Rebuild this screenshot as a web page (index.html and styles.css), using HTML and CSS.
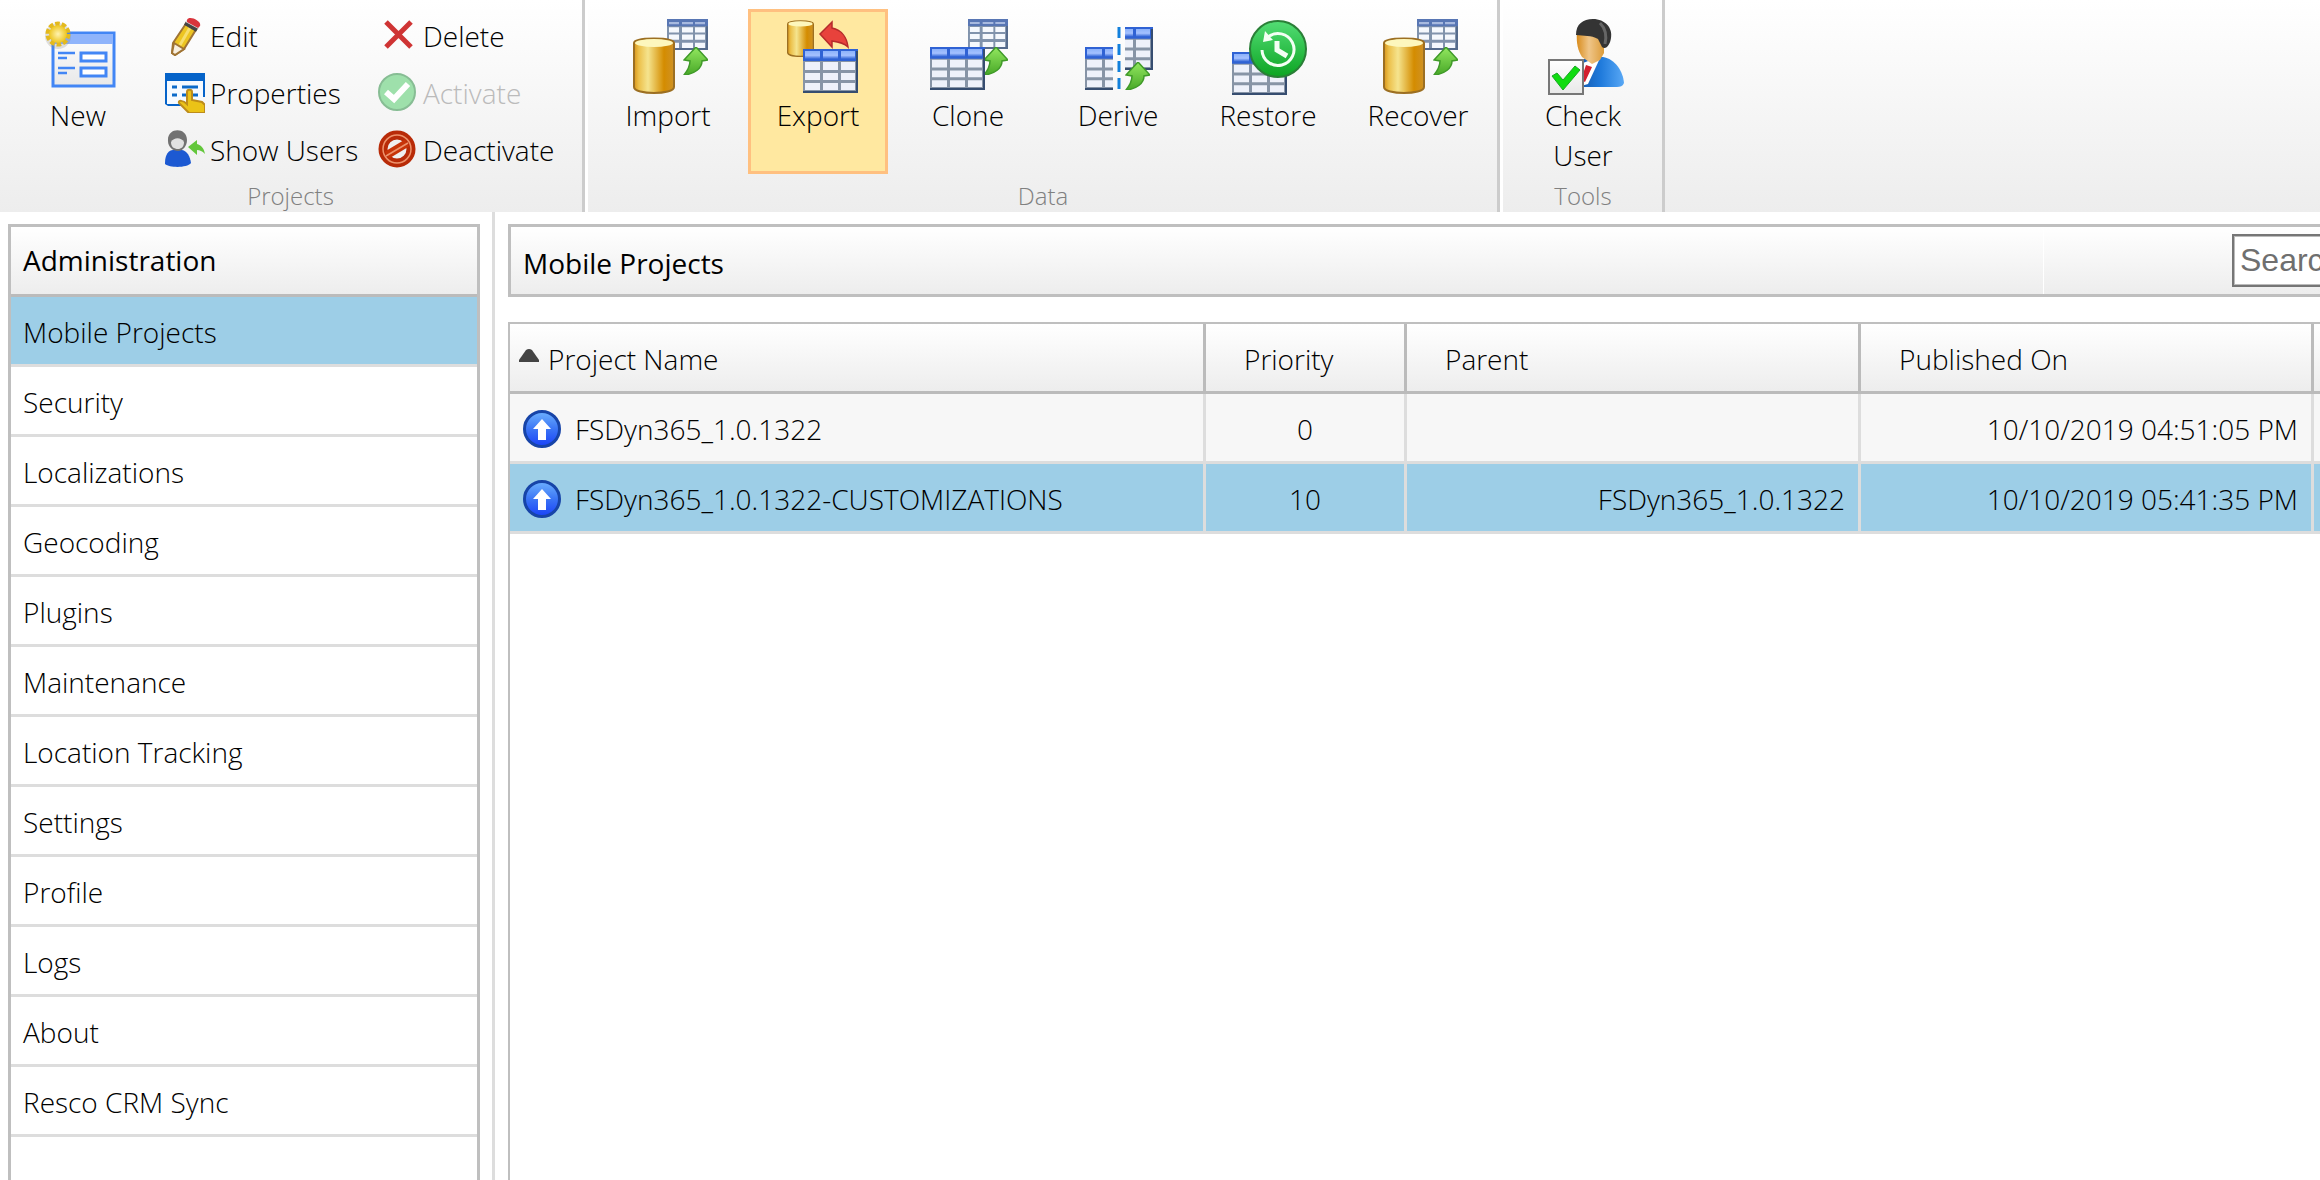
FILE: index.html
```html
<!DOCTYPE html>
<html lang="en">
<head>
<meta charset="utf-8">
<title>Mobile Projects</title>
<link rel="stylesheet" href="styles.css">
</head>
<body>
<svg class="defs" aria-hidden="true">
  <defs>
    <linearGradient id="gold"><stop offset="0" stop-color="#d9951a"/><stop offset=".12" stop-color="#ecc04a"/><stop offset=".35" stop-color="#f5e48e"/><stop offset=".75" stop-color="#d48c00"/><stop offset="1" stop-color="#cf9226"/></linearGradient>
    <linearGradient id="blue" x2="0" y2="1"><stop offset="0" stop-color="#8db2fa"/><stop offset=".55" stop-color="#a4c1ff"/><stop offset="1" stop-color="#2f62d4"/></linearGradient>
    <linearGradient id="green" x2="0" y2="1"><stop offset="0" stop-color="#93e860"/><stop offset="1" stop-color="#48a827"/></linearGradient>
    <linearGradient id="disc" x2="0" y2="1"><stop offset="0" stop-color="#53dd75"/><stop offset="1" stop-color="#0ca422"/></linearGradient>
    <linearGradient id="up" x2="0" y2="1"><stop offset="0" stop-color="#6db1ff"/><stop offset=".5" stop-color="#3b75f5"/><stop offset="1" stop-color="#1941f8"/></linearGradient>
    <linearGradient id="coat"><stop offset="0" stop-color="#1357ad"/><stop offset=".5" stop-color="#207bdc"/><stop offset="1" stop-color="#59a8f5"/></linearGradient>
    <linearGradient id="skin"><stop offset="0" stop-color="#d98c1c"/><stop offset=".45" stop-color="#efc588"/><stop offset="1" stop-color="#dc9c3a"/></linearGradient>
    <linearGradient id="paper" x2="0" y2="1"><stop offset="0" stop-color="#fff"/><stop offset="1" stop-color="#e8e8e8"/></linearGradient>
    <radialGradient id="sun"><stop offset="0" stop-color="#fff3b0"/><stop offset="1" stop-color="#edc51f"/></radialGradient>
    <symbol id="drum" viewBox="0 0 42 57" preserveAspectRatio="none">
      <path d="M1 6C1 0 41 0 41 6V50C41 58 1 58 1 50Z" fill="url(#gold)" stroke="#9c6f22" stroke-width="2"/>
      <ellipse cx="21" cy="6" rx="19" ry="4" fill="#fdf7bd"/>
    </symbol>
    <symbol id="grid" viewBox="0 0 55 44" preserveAspectRatio="none">
      <path d="M0 0H55V44H0Z" fill="#8794a6"/>
      <path d="M0 0H55V12H0Z" fill="#2f62d4"/>
      <path d="M2 2H17V10H2ZM20 2H35V10H20ZM38 2H52V10H38Z" fill="url(#blue)"/>
      <path d="M2 13H17V21H2ZM20 13H35V21H20ZM38 13H52V21H38ZM2 24H17V31H2ZM20 24H35V31H20ZM38 24H52V31H38ZM2 34H17V41H2ZM20 34H35V41H20ZM38 34H52V41H38Z" fill="#eef1fa"/>
      <path d="M0 43H54V2" fill="none" stroke="#364d70" stroke-width="2"/>
    </symbol>
    <symbol id="sheet" viewBox="0 0 41 30" preserveAspectRatio="none">
      <path d="M0 0H41V30H0Z" fill="#8193ac"/>
      <path d="M0 0H41V7H0Z" fill="#5876b4"/>
      <path d="M2 3H12V5H2ZM15 3H26V5H15ZM28 3H38V5H28Z" fill="#a7b9df"/>
      <path d="M2 8H12V13H2ZM15 8H26V13H15ZM28 8H38V13H28ZM2 15H12V20H2ZM15 15H26V20H15ZM28 15H38V20H28ZM2 23H12V28H2ZM15 23H26V28H15ZM28 23H38V28H28Z" fill="#f5f8fd"/>
      <path d="M0 29H40V7" fill="none" stroke="#566b8c" stroke-width="2"/>
    </symbol>
    <symbol id="swoosh" viewBox="0 0 25 28">
      <path d="M13 0L25 13L19 14C19 21 12 27 1 28C5 23 7 18 7 14L1 13Z" fill="url(#green)" stroke="#3f9a28" stroke-width="1.5"/>
    </symbol>
    <symbol id="published" viewBox="0 0 38 38">
      <circle cx="19" cy="19" r="17.5" fill="url(#up)" stroke="#1744a8" stroke-width="3"/>
      <path d="M19 9L28 19H23V30H15V19H10Z" fill="#fff"/>
    </symbol>
  </defs>
</svg>

<header class="ribbon">
  <section class="group">
    <div class="tools">
      <button class="big" type="button">
        <svg class="icon" viewBox="0 0 80 80">
          <rect x="15" y="17" width="61" height="53" fill="url(#paper)" stroke="#4286f5" stroke-width="3"/>
          <path d="M16 18H75V28H16Z" fill="#8fb4fb"/>
          <path d="M20 37H37M20 42H29M20 52H37M20 57H29" stroke="#4286f5" stroke-width="2.5"/>
          <path d="M43 37H68V45H43ZM43 52H68V60H43Z" fill="#fff" stroke="#4286f5" stroke-width="3"/>
          <circle cx="20" cy="20" r="13" fill="#888" opacity=".25"/>
          <circle cx="20" cy="18" r="10" fill="none" stroke="#e3b91e" stroke-width="5" stroke-dasharray="4.4 1.9"/>
          <circle cx="20" cy="18" r="9" fill="url(#sun)"/>
        </svg>
        <span>New</span>
      </button>
      <div class="stack">
        <button class="small" type="button">
          <svg class="mini" viewBox="0 0 40 40">
            <path d="M8 27L22 6L32 12L19 33L10 39L7 37Z" fill="#edc522" stroke="#a07434" stroke-width="2"/>
            <path d="M9 27L19 33L10 39L7 37Z" fill="#f8efe0" stroke="#a07434" stroke-width="2"/>
            <path d="M26 10L15 29" stroke="#f7df70" stroke-width="3"/>
            <path d="M20 7L32 14" stroke="#444" stroke-width="4"/><path d="M21 5L34 12" stroke="#ddd" stroke-width="2"/>
            <path d="M22 4C24 -1 37 5 35 10L33 12L22 6Z" fill="#d9343c"/>
          </svg>Edit
        </button>
        <button class="small" type="button">
          <svg class="mini" viewBox="0 0 40 40">
            <path d="M0 0H40V24H38V8H2V30L4 31H20V33H3L0 31Z" fill="#0563c9"/>
            <path d="M2 8H38V31H2Z" fill="#f6faff"/>
            <path d="M7 14H12M17 14H33M7 22H12M17 22H33" stroke="#0c6ac9" stroke-width="3"/>
            <path d="M22 19C22 16 27 16 27 19V27L37 29L40 32V40H24L14 30C13 27 18 27 22 31Z" fill="#ebc317" stroke="#bd8c1b" stroke-width="2"/>
          </svg>Properties
        </button>
        <button class="small" type="button">
          <svg class="mini" viewBox="0 0 40 40">
            <path d="M0 33C0 24 4 20 8 20H17C22 21 25 26 26 33C22 38 5 38 0 34Z" fill="#1c59d2"/>
            <path d="M3 11C2 -3 22 -3 22 10C22 16 18 21 13 21C8 21 3 17 3 11Z" fill="#727272"/>
            <path d="M6 12C9 7 16 7 19 12C19 17 16 19 13 19C9 19 6 17 6 12Z" fill="#e1e1e1"/>
            <path d="M23 17L32 10V14C36 15 39 18 40 24C37 21 35 20 32 20V25Z" fill="#63c73b"/>
          </svg>Show Users
        </button>
        <button class="small" type="button">
          <svg class="mini" viewBox="0 0 40 40"><path d="M8 6L33 31M33 6L8 31" stroke="#cf3434" stroke-width="5"/></svg>Delete
        </button>
        <button class="small" type="button" disabled>
          <svg class="mini" viewBox="0 0 40 40">
            <circle cx="19" cy="19" r="18" fill="#9ee0ab" stroke="#87bd94" stroke-width="2"/>
            <path d="M8 19L16 26L30 11" fill="none" stroke="#fff" stroke-width="6"/>
          </svg>Activate
        </button>
        <button class="small" type="button">
          <svg class="mini" viewBox="0 0 40 40">
            <circle cx="19" cy="19" r="14" fill="#efefef" stroke="#b82b08" stroke-width="9"/>
            <path d="M9 25L29 13" stroke="#c73409" stroke-width="8"/>
            <circle cx="19" cy="19" r="14" fill="none" stroke="#ee936c" stroke-width="1.5"/>
            <path d="M8 26L30 13" stroke="#ee936c" stroke-width="1.5"/>
          </svg>Deactivate
        </button>
      </div>
    </div>
    <h2 class="caption">Projects</h2>
  </section>

  <section class="group">
    <div class="tools">
      <button class="big" type="button">
        <svg class="icon" viewBox="0 0 80 80">
          <use href="#sheet" x="39" y="3" width="41" height="31"/>
          <use href="#drum" x="5" y="21" width="42" height="57"/>
          <use href="#swoosh" x="55" y="31" width="25" height="28"/>
        </svg>
        <span>Import</span>
      </button>
      <button class="big active" type="button">
        <svg class="icon" viewBox="0 0 80 80">
          <use href="#drum" x="9" y="4" width="27" height="37"/>
          <use href="#grid" x="25" y="33" width="55" height="44"/>
          <path d="M42 18L54 6V12C64 14 69 22 70 31C66 27 62 26 54 25V31Z" fill="#e8423c" stroke="#b52b2b" stroke-width="1.5"/>
        </svg>
        <span>Export</span>
      </button>
      <button class="big" type="button">
        <svg class="icon" viewBox="0 0 80 80">
          <use href="#sheet" x="40" y="3" width="40" height="30"/>
          <use href="#swoosh" x="55" y="31" width="25" height="28"/>
          <use href="#grid" x="2" y="31" width="55" height="43"/>
        </svg>
        <span>Clone</span>
      </button>
      <button class="big" type="button">
        <svg class="icon" viewBox="0 0 80 80">
          <svg x="7" y="31" width="28" height="43"><use href="#grid" width="55" height="43"/></svg>
          <svg x="47" y="11" width="28" height="43"><use href="#grid" x="-27" width="55" height="43"/></svg>
          <path d="M41 11V74" stroke="#1280dc" stroke-width="3" stroke-dasharray="11 6"/>
          <use href="#swoosh" x="47" y="46" width="25" height="28"/>
        </svg>
        <span>Derive</span>
      </button>
      <button class="big" type="button">
        <svg class="icon" viewBox="0 0 80 80">
          <use href="#grid" x="4" y="36" width="55" height="43"/>
          <circle cx="50" cy="33" r="28" fill="url(#disc)" stroke="#2a7f37" stroke-width="2"/>
          <path d="M40 21A16 16 0 1 1 34 34" fill="none" stroke="#f3fff3" stroke-width="3"/>
          <path d="M37 15L35 26L45 24Z" fill="#f3fff3"/>
          <path d="M49 25V34L59 40" fill="none" stroke="#f3fff3" stroke-width="5"/>
        </svg>
        <span>Restore</span>
      </button>
      <button class="big" type="button">
        <svg class="icon" viewBox="0 0 80 80">
          <use href="#sheet" x="39" y="3" width="41" height="31"/>
          <use href="#drum" x="5" y="21" width="42" height="57"/>
          <use href="#swoosh" x="55" y="31" width="25" height="28"/>
        </svg>
        <span>Recover</span>
      </button>
    </div>
    <h2 class="caption">Data</h2>
  </section>

  <section class="group">
    <div class="tools">
      <button class="big" type="button">
        <svg class="icon" viewBox="0 0 80 80">
          <path d="M35 71V47L44 41H60C72 43 80 55 81 67C80 70 77 71 74 71Z" fill="url(#coat)"/>
          <path d="M40 47L58 40L45 68L38 70Z" fill="#fff"/>
          <path d="M43 49L49 51L42 66L38 64Z" fill="#d3202e"/>
          <path d="M34 17C40 9 56 10 61 19V37L57 44L49 48L39 41C35 35 33 26 34 17Z" fill="url(#skin)"/>
          <path d="M33 19C33 8 40 3 50 3C62 3 70 12 68 22C67 29 63 34 59 31L55 23C48 19 41 20 33 19Z" fill="#343434"/>
          <path d="M57 7Q65 15 62 28" fill="none" stroke="#666" stroke-width="3"/>
          <rect x="6" y="44" width="34" height="34" fill="url(#paper)" stroke="#777" stroke-width="2"/>
          <path d="M9 60L14 57L20 64L32 50L37 54L20 74Z" fill="#10dc10" stroke="#18a824" stroke-width="1"/>
        </svg>
        <span>Check User</span>
      </button>
    </div>
    <h2 class="caption">Tools</h2>
  </section>
</header>

<div class="workspace">
  <aside class="side">
    <nav class="menu">
      <h1 class="menu-title">Administration</h1>
      <a class="current" href="#projects" aria-current="page">Mobile Projects</a>
      <a href="#security">Security</a>
      <a href="#localizations">Localizations</a>
      <a href="#geocoding">Geocoding</a>
      <a href="#plugins">Plugins</a>
      <a href="#maintenance">Maintenance</a>
      <a href="#tracking">Location Tracking</a>
      <a href="#settings">Settings</a>
      <a href="#profile">Profile</a>
      <a href="#logs">Logs</a>
      <a href="#about">About</a>
      <a href="#sync">Resco CRM Sync</a>
    </nav>
  </aside>

  <main class="content">
    <div class="titlebar">
      <h1 class="title">Mobile Projects</h1>
      <div class="search"><input type="text" placeholder="Search" aria-label="Search"></div>
    </div>
    <div class="listing">
      <table class="projects">
        <colgroup><col class="c-name"><col class="c-priority"><col class="c-parent"><col class="c-date"><col></colgroup>
        <thead>
          <tr>
            <th class="sorted" scope="col" aria-sort="ascending"><svg class="sort" viewBox="0 0 20 13"><path d="M7 1Q10 -1 13 1L20 11V13H0V11Z" fill="#444"/></svg>Project Name</th>
            <th scope="col">Priority</th>
            <th scope="col">Parent</th>
            <th scope="col">Published On</th>
            <th></th>
          </tr>
        </thead>
        <tbody>
          <tr>
            <td class="name"><svg class="state" viewBox="0 0 38 38"><use href="#published"/></svg>FSDyn365_1.0.1322</td>
            <td class="center">0</td>
            <td class="right"></td>
            <td class="right">10/10/2019 04:51:05 PM</td>
            <td></td>
          </tr>
          <tr class="selected">
            <td class="name"><svg class="state" viewBox="0 0 38 38"><use href="#published"/></svg>FSDyn365_1.0.1322-CUSTOMIZATIONS</td>
            <td class="center">10</td>
            <td class="right">FSDyn365_1.0.1322</td>
            <td class="right">10/10/2019 05:41:35 PM</td>
            <td></td>
          </tr>
        </tbody>
      </table>
    </div>
  </main>
</div>
</body>
</html>
```

FILE: styles.css
```css
* {
  box-sizing: border-box;
}

body {
  margin: 0;
  min-height: 100vh;
  display: flex;
  flex-direction: column;
  overflow-x: hidden;
  background: #fff;
  color: #000;
  font: 340 28px/40px "Open Sans", "Noto Sans", sans-serif;
}

h1,
h2 {
  margin: 0;
  font: inherit;
}

button {
  border: 0;
  padding: 0;
  background: none;
  color: inherit;
  font: inherit;
}

.defs {
  position: absolute;
  width: 0;
  height: 0;
}

/* Ribbon */
.ribbon {
  display: flex;
  height: 212px;
  background: linear-gradient(#fff, #ededed);
}

.group {
  display: flex;
  flex-direction: column;
  padding: 9px 9px 0 8px;
  border-right: 3px solid #ccc;
}

.group + .group {
  padding-left: 10px;
  border-left: 3px solid #fff;
}

.tools {
  display: flex;
  gap: 10px;
}

.big {
  display: flex;
  flex-direction: column;
  align-items: center;
  width: 140px;
  height: 165px;
  padding: 4px 20px 0;
  border: 3px solid transparent;
}

.big span {
  margin-top: -1px;
}

.big.active {
  border-color: #ffc080;
  background: #ffe8a0;
}

.icon {
  flex: none;
  width: 80px;
  height: 80px;
  overflow: visible;
}

.stack {
  display: grid;
  grid-template: repeat(3, 57px) / 213px 190px;
  grid-auto-flow: column;
  height: 165px;
  padding: 0 5px 0 7px;
}

.small {
  display: flex;
  align-items: center;
  gap: 5px;
  height: 54px;
  white-space: nowrap;
}

.small:disabled {
  color: #bbb;
}

.mini {
  width: 40px;
  height: 40px;
}

.caption {
  color: #808080;
  font-size: 24px;
  line-height: 44px;
  text-align: center;
}

/* Workspace */
.workspace {
  flex: 1;
  display: flex;
}

.side {
  flex: none;
  display: flex;
  width: 495px;
  padding: 12px 12px 0 8px;
  border-right: 3px solid #ddd;
}

.menu {
  flex: 1;
  border: 3px solid #bfbfbf;
  border-bottom: 0;
}

.menu-title,
.title {
  font-weight: 430;
}

.menu-title {
  height: 70px;
  padding-left: 12px;
  border-bottom: 3px solid #bbb;
  background: linear-gradient(#fff, #ededed);
  line-height: 67px;
}

.menu a {
  display: block;
  height: 70px;
  padding: 2px 0 0 12px;
  border-bottom: 3px solid #ddd;
  color: inherit;
  line-height: 67px;
  text-decoration: none;
}

.menu .current {
  background: #9dcee7;
}

/* The list runs past the right edge of the window. */
.content {
  flex: 1;
  display: flex;
  flex-direction: column;
  margin-right: -280px;
  padding: 12px 0 0 13px;
}

.titlebar {
  display: flex;
  height: 73px;
  border: 3px solid #bfbfbf;
  background: linear-gradient(#fff, #ededed);
}

.title {
  flex: 1;
  padding: 3px 0 0 12px;
  line-height: 67px;
}

.search {
  width: 554px;
  padding: 7px 0 0 188px;
  border-left: 1px solid #fff;
}

.search input {
  width: 340px;
  height: 53px;
  padding: 0 6px;
  border: 2px solid #767676;
  outline: 1px solid #bbb;
  outline-offset: -3px;
  background: #fff;
  font: 32px "Liberation Sans", Arial, sans-serif;
}

.search input::placeholder {
  color: #6f6f6f;
}

.listing {
  flex: 1;
  margin-top: 25px;
  border: solid #bfbfbf;
  border-width: 2px 0 0 2px;
}

.projects {
  width: 100%;
  table-layout: fixed;
  border-collapse: separate;
  border-spacing: 0;
}

.c-name {
  width: 696px;
}

.c-priority {
  width: 201px;
}

.c-parent {
  width: 454px;
}

.c-date {
  width: 453px;
}

th,
td {
  height: 70px;
  padding: 2px 13px 0;
  border: solid #ddd;
  border-width: 0 3px 3px 0;
  white-space: nowrap;
}

th {
  padding: 2px 38px 0;
  border-color: #bbb;
  background: linear-gradient(#fff, #ededed);
  font-weight: inherit;
  text-align: left;
}

.sorted {
  padding-left: 9px;
}

.sort {
  width: 20px;
  height: 13px;
  margin: 0 9px 8px 0;
  vertical-align: baseline;
}

td {
  background: #f7f7f7;
}

.selected td {
  background: #9dcee7;
}

.state {
  width: 38px;
  height: 38px;
  margin-right: 14px;
  vertical-align: -8px;
}

.center {
  text-align: center;
}

.right {
  text-align: right;
}
```
